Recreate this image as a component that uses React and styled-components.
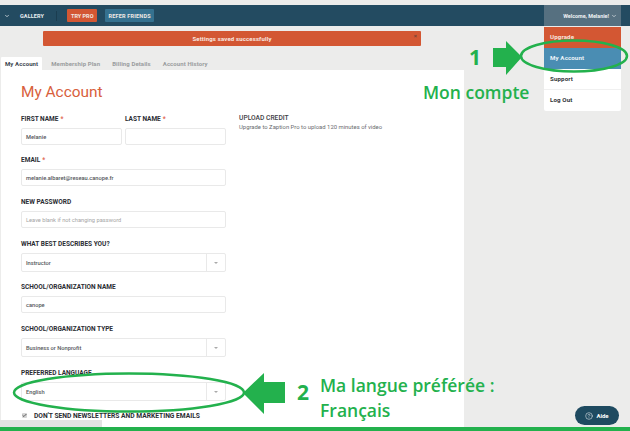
import React from 'react';
import styled, { createGlobalStyle } from 'styled-components';
import { ChevronDown, CircleHelp, Check } from 'lucide-react';

const GlobalStyle = createGlobalStyle`
  html, body {
    margin: 0;
    height: 431px;
    overflow: hidden;
    background: #ececec;
    font-family: Roboto, "Liberation Sans", sans-serif;
  }
`;

const Page = styled.div`
  position: relative;
  width: 630px;
  height: 431px;
  overflow: hidden;
  background: #ececeb;
  padding-top: 5px;
  box-sizing: border-box;
  display: flex;
  flex-direction: column;
`;

const Header = styled.header`
  flex: none;
  height: 21px;
  background: #234b61;
  display: flex;
  align-items: center;
  padding-left: 4px;
  color: #fff;
  font-size: 5.5px;
  font-weight: 700;
`;

const NavLink = styled.span`
  margin-left: 10px;
  letter-spacing: 0.1px;
  color: #e8eef1;
`;

const NavDivider = styled.span`
  width: 1px;
  height: 10px;
  background: #1b3d50;
  margin: 0 10px 0 12px;
`;

const NavButton = styled.span`
  height: 13px;
  padding: 0 ${(p) => p.$pad}px;
  margin-right: 8px;
  border-radius: 1px;
  background: ${(p) => p.$bg};
  color: #f1e9e4;
  display: flex;
  align-items: center;
  letter-spacing: ${(p) => p.$track ?? 0}px;
`;

const Welcome = styled.div`
  margin-left: auto;
  margin-right: 9px;
  width: 77px;
  height: 21px;
  background: #567080;
  display: flex;
  align-items: center;
  justify-content: flex-end;
  gap: 2px;
  padding-right: 4px;
  box-sizing: border-box;
  font-size: 5.4px;
  color: #eef2f4;
`;

const Alert = styled.div`
  flex: none;
  position: relative;
  width: 378px;
  height: 15px;
  margin: 5px 0 0 43px;
  background: #d35733;
  border-radius: 1px;
  color: #f8e8e0;
  font-size: 6px;
  font-weight: 700;
  letter-spacing: 0.15px;
  display: flex;
  align-items: center;
  justify-content: center;
`;

const AlertClose = styled.span`
  position: absolute;
  right: 4px;
  top: 1px;
  font-size: 6px;
  color: #7a4535;
`;

const Tabs = styled.nav`
  flex: none;
  display: flex;
  margin: 11px 0 0 1px;
  height: 13px;
`;

const Tab = styled.span`
  display: flex;
  align-items: center;
  padding: 0 ${(p) => (p.$active ? '4px' : '6px')};
  margin-right: ${(p) => (p.$active ? '3px' : '0')};
  background: ${(p) => (p.$active ? '#fff' : 'transparent')};
  color: ${(p) => (p.$active ? '#3d4650' : '#9a9c9e')};
  font-size: 6px;
  font-weight: 700;
  letter-spacing: 0.1px;
  border-radius: 1px 1px 0 0;
`;

const Panel = styled.main`
  flex: 1;
  width: 463px;
  margin-left: 1px;
  background: #fff;
  padding: 12px 0 0 20px;
  box-sizing: border-box;
`;

const Title = styled.h1`
  margin: 0 0 12px;
  font-size: 15.4px;
  line-height: 20px;
  font-weight: 400;
  color: #d8603c;
`;

const Columns = styled.div`
  display: flex;
  gap: 13px;
`;

const FormColumn = styled.form`
  width: 205px;
  flex: none;
`;

const Row = styled.div`
  display: flex;
  gap: 3px;
`;

const Field = styled.div`
  flex: 1;
  margin-bottom: ${(p) => p.$gap ?? 11}px;
`;

const Label = styled.label`
  display: block;
  height: 14px;
  line-height: 10px;
  font-size: 6.5px;
  font-weight: 700;
  color: #2b2d33;
  white-space: nowrap;
`;

const Required = styled.span`
  color: #e26a55;
  margin-left: 2px;
`;

const Input = styled.div`
  height: 17px;
  border: 1px solid #e9e9e9;
  border-radius: 2px;
  box-sizing: border-box;
  padding-left: 4px;
  display: flex;
  align-items: center;
  font-size: 5.7px;
  color: ${(p) => (p.$muted ? '#a5a5a5' : '#55575b')};
  font-weight: ${(p) => (p.$muted ? 400 : 500)};
`;

const Select = styled(Input)`
  height: 19px;
  justify-content: space-between;
`;

const Caret = styled.span`
  width: 18px;
  height: 100%;
  border-left: 1px solid #e9e9e9;
  display: flex;
  align-items: center;
  justify-content: center;
  &::after {
    content: '';
    border: 2px solid transparent;
    border-top: 2px solid #aaa;
    margin-top: 2px;
  }
`;

const CheckRow = styled.div`
  display: flex;
  align-items: flex-start;
  gap: 7px;
  margin-left: 1px;
  line-height: 8px;
  font-size: 6.7px;
  font-weight: 700;
  color: #2b2d33;
  white-space: nowrap;
`;

const CheckBox = styled.span`
  width: 5px;
  height: 5px;
  margin-top: 1px;
  background: #d5d5d5;
  border-radius: 1px;
  display: flex;
  align-items: center;
  justify-content: center;
  color: #444;
`;

const SideColumn = styled.aside``;

const SideTitle = styled.div`
  font-size: 6.7px;
  font-weight: 500;
  color: #3e4045;
  line-height: 8px;
  margin-bottom: 1px;
`;

const SideText = styled.div`
  font-size: 5.9px;
  color: #6a6c70;
  line-height: 8px;
`;

const Menu = styled.ul`
  position: absolute;
  top: 27px;
  left: 544px;
  width: 77px;
  margin: 0;
  padding: 0;
  list-style: none;
  background: #fff;
  border-radius: 0 0 2px 2px;
`;

const MenuItem = styled.li`
  height: 21px;
  background: ${(p) => p.$bg ?? 'transparent'};
  color: ${(p) => p.$color ?? '#33363a'};
  border-bottom: 1px solid ${(p) => p.$line ?? '#f0f0f0'};
  box-sizing: border-box;
  padding-left: 6px;
  display: flex;
  align-items: center;
  font-size: 6.2px;
  font-weight: 700;
  letter-spacing: 0.1px;
`;

const Overlay = styled.svg`
  position: absolute;
  inset: 0;
  pointer-events: none;
`;

const Note = styled.div`
  position: absolute;
  left: ${(p) => p.$x}px;
  top: ${(p) => p.$y}px;
  font-family: "Open Sans", sans-serif;
  font-size: ${(p) => p.$size}px;
  line-height: 20px;
  font-weight: ${(p) => p.$weight ?? 600};
  color: #23b14d;
  white-space: nowrap;
`;

const Scrollbar = styled.div`
  position: absolute;
  left: 0;
  top: 420px;
  width: 102px;
  height: 7px;
  background: #e3e3e3;
`;

const BottomLine = styled.div`
  position: absolute;
  left: 0;
  right: 0;
  bottom: 0;
  height: 4px;
  background: #23b14d;
`;

const HelpButton = styled.div`
  position: absolute;
  left: 575px;
  top: 406px;
  width: 44px;
  height: 19px;
  border-radius: 10px;
  background: #1e4a60;
  color: #fff;
  font-size: 6px;
  font-weight: 700;
  display: flex;
  align-items: center;
  justify-content: center;
  gap: 3px;
`;

const App = () => (
  <Page>
    <GlobalStyle />
    <Header>
      <ChevronDown size={6} strokeWidth={2.5} />
      <NavLink>GALLERY</NavLink>
      <NavDivider />
      <NavButton $bg="#d35733" $pad={4}>TRY PRO</NavButton>
      <NavButton $bg="#35718f" $pad={3} $track={0.2}>REFER FRIENDS</NavButton>
      <Welcome>
        Welcome, Melanie!
        <ChevronDown size={6} strokeWidth={2.5} />
      </Welcome>
    </Header>
    <Alert>
      Settings saved successfully
      <AlertClose>×</AlertClose>
    </Alert>
    <Tabs>
      <Tab $active>My Account</Tab>
      <Tab>Membership Plan</Tab>
      <Tab>Billing Details</Tab>
      <Tab>Account History</Tab>
    </Tabs>
    <Panel>
      <Title>My Account</Title>
      <Columns>
        <FormColumn>
          <Row>
            <Field $gap={10}>
              <Label>FIRST NAME<Required>*</Required></Label>
              <Input>Melanie</Input>
            </Field>
            <Field $gap={10}>
              <Label>LAST NAME<Required>*</Required></Label>
              <Input />
            </Field>
          </Row>
          <Field>
            <Label>EMAIL<Required>*</Required></Label>
            <Input>melanie.albaret@reseau.canope.fr</Input>
          </Field>
          <Field>
            <Label>NEW PASSWORD</Label>
            <Input $muted>Leave blank if not changing password</Input>
          </Field>
          <Field $gap={10}>
            <Label>WHAT BEST DESCRIBES YOU?</Label>
            <Select>Instructor<Caret /></Select>
          </Field>
          <Field>
            <Label>SCHOOL/ORGANIZATION NAME</Label>
            <Input>canope</Input>
          </Field>
          <Field>
            <Label>SCHOOL/ORGANIZATION TYPE</Label>
            <Select>Business or Nonprofit<Caret /></Select>
          </Field>
          <Field>
            <Label>PREFERRED LANGUAGE</Label>
            <Select>English<Caret /></Select>
          </Field>
          <CheckRow>
            <CheckBox><Check size={5} strokeWidth={4} /></CheckBox>
            DON'T SEND NEWSLETTERS AND MARKETING EMAILS
          </CheckRow>
        </FormColumn>
        <SideColumn>
          <SideTitle>UPLOAD CREDIT</SideTitle>
          <SideText>Upgrade to Zaption Pro to upload 120 minutes of video</SideText>
        </SideColumn>
      </Columns>
    </Panel>
    <Menu>
      <MenuItem $bg="#d35733" $color="#f8e4dc" $line="#d35733">Upgrade</MenuItem>
      <MenuItem $bg="#4a8db3" $color="#eaf3f8" $line="#4a8db3">My Account</MenuItem>
      <MenuItem>Support</MenuItem>
      <MenuItem $line="transparent">Log Out</MenuItem>
    </Menu>
    <Scrollbar />
    <BottomLine />
    <Overlay width="630" height="431" viewBox="0 0 630 431">
      <ellipse cx="574" cy="56" rx="53" ry="15.5" fill="none" stroke="#23b14d" strokeWidth="2.5" />
      <path d="M493 48h13v-7l16 16-16 18v-8h-13z" fill="#23b14d" />
      <ellipse cx="129" cy="392.5" rx="115" ry="19" fill="none" stroke="#23b14d" strokeWidth="2.5" />
      <path d="M285 382h-21v-9l-21 20 21 21v-11h21z" fill="#23b14d" />
    </Overlay>
    <Note $x={469} $y={47} $size={21} $weight={700}>1</Note>
    <Note $x={423} $y={82} $size={17.5}>Mon compte</Note>
    <Note $x={297} $y={382} $size={21} $weight={700}>2</Note>
    <Note $x={320} $y={375} $size={17.5}>Ma langue préférée :</Note>
    <Note $x={320} $y={400} $size={17.5}>Français</Note>
    <HelpButton>
      <CircleHelp size={8} strokeWidth={1.5} />
      Aide
    </HelpButton>
  </Page>
);

export default App;
